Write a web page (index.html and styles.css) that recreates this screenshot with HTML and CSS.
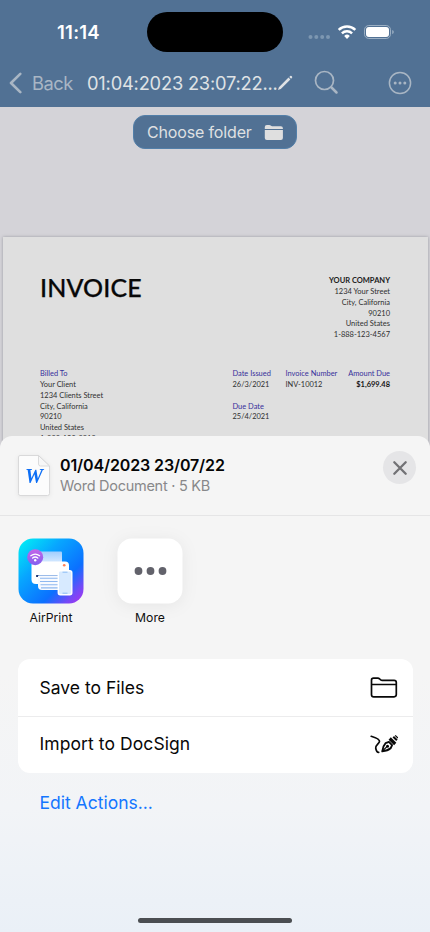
FILE: index.html
```html
<!DOCTYPE html>
<html lang="en">
<head>
<meta charset="utf-8">
<meta name="viewport" content="width=device-width, initial-scale=1">
<title>Share document</title>
<link rel="stylesheet" href="styles.css">
</head>
<body>
<div class="screen">
  <header class="header">
    <div class="status">
      <span class="time">11:14</span>
      <span class="island"></span>
      <svg class="status-icons" width="90" height="20" viewBox="0 0 90 20">
        <g fill="#7d97b1"><circle cx="2.500" cy="15" r="2"/><circle cx="8.300" cy="15" r="2"/><circle cx="14.200" cy="15" r="2"/><circle cx="20" cy="15" r="2"/></g>
        <g fill="none" stroke="#fff" stroke-width="2.500"><path d="M30.700 7.800a12 12 0 0 1 16.600 0"/><path d="M33.900 11.300a7.400 7.400 0 0 1 10.200 0"/></g>
        <path d="M36.200 13.900a4 4 0 0 1 5.600 0l-2.800 3z" fill="#fff"/>
        <rect x="56.500" y="3.500" width="26" height="13" rx="4.300" fill="none" stroke="#9bafc3"/>
        <rect x="58" y="5" width="23" height="10" rx="2.900" fill="#fff"/>
        <path d="M84.300 8v4.200q1.400-.6 1.400-2.100t-1.400-2.100z" fill="#a5b7c8"/>
      </svg>
    </div>
    <nav class="nav">
      <svg class="chevron" width="14" height="22" viewBox="0 0 14 22"><path d="M11.300 1.800 2 11l9.300 9.200" fill="none" stroke="#a9b6c4" stroke-width="2.600" stroke-linecap="round" stroke-linejoin="round"/></svg>
      <span class="back">Back</span>
      <span class="title">01:04:2023 23:07:22...</span>
      <svg class="pencil" width="16" height="16" viewBox="0 0 16 16"><path d="m1 15 .9-2.800L11.500 2.600l1.900 1.900L3.800 14zM12.300 1.900l.9-.9q.7-.6 1.300 0l.5.500q.6.700 0 1.300l-.9.900z" fill="#dfe2e5"/></svg>
      <svg class="search" width="26" height="26" viewBox="0 0 26 26"><circle cx="10.500" cy="10.500" r="9" fill="none" stroke="#a9b6c4" stroke-width="1.700"/><path d="m17.500 17.500 5 5" stroke="#a9b6c4" stroke-width="2.500" stroke-linecap="round"/></svg>
      <svg class="options" width="24" height="24" viewBox="0 0 24 24"><circle cx="12" cy="12" r="10.600" fill="none" stroke="#a9b6c4" stroke-width="1.500"/><g fill="#a9b6c4"><circle cx="7.200" cy="12" r="1.500"/><circle cx="12" cy="12" r="1.500"/><circle cx="16.800" cy="12" r="1.500"/></g></svg>
    </nav>
  </header>

  <main class="viewer">
    <div class="choose">
      <span class="choose-label">Choose folder</span>
      <svg width="20" height="17" viewBox="0 0 20 17"><path d="M.8 5V2.900Q.8.900 2.800.9h2.500q.8 0 1.400.5l.8.600q.5.300 1.200.3h8.200q2 0 2 2V5zM.8 6h18.100v8q0 2-2 2H2.800q-2 0-2-2z" fill="#dfdfdf"/></svg>
    </div>
    <article class="invoice">
      <section class="invoice-top">
        <h1 class="invoice-title">INVOICE</h1>
        <div class="company"><b>YOUR COMPANY</b><br>1234 Your Street<br>City, California<br>90210<br>United States<br>1-888-123-4567</div>
      </section>
      <section class="invoice-info">
        <div class="client"><span class="label">Billed To</span><br>Your Client<br>1234 Clients Street<br>City, California<br>90210<br>United States<br>1-888-123-8910</div>
        <div class="dates"><span class="label">Date Issued</span><br>26/3/2021<br><br><span class="label">Due Date</span><br>25/4/2021</div>
        <div class="number"><span class="label">Invoice Number</span><br>INV-10012</div>
        <div class="amount"><span class="label">Amount Due</span><br><b>$1,699.48</b></div>
      </section>
    </article>
  </main>

  <section class="sheet">
    <header class="sheet-header">
      <svg class="doc" width="34" height="44" viewBox="0 0 34 44">
        <path d="M3 1.500h18.500L32.500 12v27.500q0 2-2 2H3q-1.500 0-1.500-2V3Q1.500 1.500 3 1.500z" fill="#fcfcfc" stroke="#d9d9da"/>
        <path d="M21.500 1.500V10q0 2 2 2h9z" fill="#f7f7f7" stroke="#d3d3d4" stroke-width=".8"/>
        <text class="doc-letter" x="17" y="28.500" text-anchor="middle" textLength="18" lengthAdjust="spacingAndGlyphs">W</text>
      </svg>
      <div class="file">
        <div class="file-name">01/04/2023 23/07/22</div>
        <div class="file-type">Word Document · 5 KB</div>
      </div>
      <div class="close"><svg width="16" height="16" viewBox="0 0 16 16"><path d="m2.300 2.300 11.400 11.400m0-11.400L2.300 13.700" stroke="#727275" stroke-width="2.300" stroke-linecap="round"/></svg></div>
    </header>
    <div class="apps">
      <div class="app">
        <svg class="app-icon" width="66" height="66" viewBox="0 0 66 66">
          <defs>
            <linearGradient id="bg" x1="0" y1="0" x2="1" y2="1"><stop offset="0" stop-color="#00f5f4"/><stop offset=".34" stop-color="#08a6ff"/><stop offset=".68" stop-color="#0b70ff"/><stop offset=".86" stop-color="#7549f7"/><stop offset="1" stop-color="#b230ed"/></linearGradient>
            <linearGradient id="paper" x1="0" y1="0" x2="0" y2="1"><stop stop-color="#9fceff"/><stop offset="1" stop-color="#dcecff"/></linearGradient>
            <linearGradient id="badge" x1="0" y1="0" x2="0" y2="1"><stop stop-color="#c565e8"/><stop offset="1" stop-color="#8260ef"/></linearGradient>
          </defs>
          <rect x=".5" y=".5" width="65" height="65" rx="14.500" fill="url(#bg)"/>
          <rect x="20.500" y="13.500" width="23.500" height="12" rx="1" fill="url(#paper)"/>
          <path d="M17 23.500h30q4 0 4 4V41q0 5-5 5H18q-4.500 0-4.500-4.500V27q0-3.500 3.500-3.500z" fill="#fff"/>
          <rect x="18" y="37" width="26" height="2" rx=".8" fill="#9dbce9"/><rect x="18" y="37" width="2.500" height="2" rx=".8" fill="#20356f"/>
          <path d="M20 38h22v14H24q-4 0-4-4z" fill="#f7faff"/>
          <path d="M22 40.300h18M22 43.500h18M22.500 46.700h17.500M23 49.900h17" stroke="#8eb8f0" stroke-width="1.100"/>
          <circle cx="46.200" cy="27.200" r="1.300" fill="#ff8056"/>
          <rect x="40.300" y="32.800" width="13.500" height="24" rx="2" fill="#d7eaff" stroke="#fff" stroke-width="1.400"/>
          <path d="M44.500 34.200h5m-5 21h5" stroke="#8dbdf4" stroke-width="1"/>
          <circle cx="17.200" cy="19.200" r="8" fill="url(#badge)"/>
          <g fill="none" stroke="#fff" stroke-width="1.300" stroke-linecap="round"><path d="M12.800 17.700q4.400-3.300 8.800 0"/><path d="M14.600 20q2.600-2 5.200 0"/></g><circle cx="17.200" cy="22.200" r="1.200" fill="#fff"/>
        </svg>
        <span class="app-label">AirPrint</span>
      </div>
      <div class="app">
        <svg class="app-icon more" width="66" height="66" viewBox="0 0 66 66"><rect x=".5" y=".5" width="65" height="65" rx="14.500" fill="#fff"/><g fill="#62626b"><circle cx="21.500" cy="33" r="3.900"/><circle cx="33.500" cy="33" r="3.900"/><circle cx="45.500" cy="33" r="3.900"/></g></svg>
        <span class="app-label">More</span>
      </div>
    </div>
    <div class="actions">
      <div class="action"><span>Save to Files</span>
        <svg width="28" height="24" viewBox="0 0 28 24"><path d="M1.500 19.700V5.200q0-2 2-2h4.300q1 0 1.800.7l1.100.9q.6.500 1.500.5h11.900q2.200 0 2.200 2.200v12.100q0 2.200-2.200 2.200H3.700q-2.200 0-2.200-2.100zM1.500 9.500h24.800" fill="none" stroke="#080808" stroke-width="1.700" stroke-linejoin="round"/></svg>
      </div>
      <div class="action"><span class="import-label">Import to DocSign</span>
        <svg width="28" height="24" viewBox="0 0 28 24"><g transform="translate(0 1)"><path d="M1.200 3.300C5 4.500 10 6.300 9.500 8.600 9 10.700 5.300 12.500 5.700 15c.3 2 1.100 4.300 3 4.400" fill="none" stroke="#090909" stroke-width="1.700" stroke-linecap="round"/><path d="M12.300 18.300q.6-5.300 3.300-8.100l3.300-1.300 3.200 3.200-1.500 3.200q-2.800 2.500-8.300 3z" fill="#fff" stroke="#090909" stroke-width="1.900" stroke-linejoin="round"/><path d="m12 18.500 4.700-4.700" stroke="#090909" stroke-width="1.200"/><circle cx="17.500" cy="13.300" r="1.500"/><path d="m19.700 5.500 5.500 5.500" stroke="#090909" stroke-width="3.200"/><path d="m23.300 3.700 3.600 3.600" stroke="#090909" stroke-width="2"/><path d="m25.200 2.300 2.700 2.700" stroke="#090909" stroke-width="1.200"/></g></svg>
      </div>
    </div>
    <div class="edit"><span>Edit Actions...</span></div>
    <div class="home"></div>
  </section>
</div>
</body>
</html>
```
FILE: styles.css
```css
* { box-sizing: border-box; }
body { margin: 0; font-family: Inter, sans-serif; }
svg { display: block; flex: none; }
.screen { position: relative; width: 430px; height: 932px; overflow: hidden; background: #d4d3d8; }
.header { height: 107px; background: #517194; }
.status { height: 64px; display: flex; align-items: center; padding-left: 57px; }
.time { width: 90px; font-size: 18.5px; font-weight: 600; letter-spacing: .25px; color: #fff; white-space: nowrap; }
.island { width: 136px; height: 40px; border-radius: 20px; background: #000; }
.status-icons { margin-left: 25px; }
.nav { height: 38px; display: flex; align-items: center; padding-left: 9px; white-space: nowrap; }
.back { width: 55px; padding-left: 9px; font-size: 18.3px; color: #a9b6c4; letter-spacing: -.5px; }
.title { width: 192px; margin-left: 9px; font-size: 18.3px; color: #dfe2e5; letter-spacing: -.2px; }
.pencil { margin-left: -2px; }
.search { margin-left: 21px; }
.options { margin-left: 48px; }
.viewer { padding-top: 8px; }
.choose { width: 164px; height: 34px; margin: 0 auto; border-radius: 12px; border: 1px solid #527fa9; background: #517194; display: flex; align-items: center; padding-left: 13px; gap: 12px; color: #dfe0e2; white-space: nowrap; }
.choose-label { width: 105px; font-size: 16px; letter-spacing: -.15px; }
.invoice { width: 425px; height: 500px; margin: 88px 0 0 2.500px; padding: 36px 37.500px 0; background: #dfdfdf; box-shadow: 0 0 3px #9999a0; font: 7.350px/10.850px Lato, sans-serif; color: #303030; white-space: nowrap; }
.invoice-top { height: 96px; display: flex; justify-content: space-between; }
.invoice-title { margin: 0; font-size: 25px; font-weight: 500; line-height: 28px; letter-spacing: .1px; color: #080808; -webkit-text-stroke: .25px #080808; }
.company { padding-top: 3px; text-align: right; font-size: 7.500px; }
.company b { color: #202020; }
.invoice-info { display: grid; grid-template-columns: 192.500px 53px 56px 1fr; font-size: 7.450px; }
.label { color: #37309b; }
.amount { justify-self: end; text-align: right; }
.amount b { color: #151515; }
.sheet { position: absolute; inset: 436px 0 0; border-radius: 12px 12px 0 0; background: linear-gradient(#f5f5f5 0%, #f5f5f5 48%, #f2f4f7 75%, #eaf0f7 100%); }
.sheet-header { height: 80px; border-bottom: 1.500px solid #e5e5e6; display: flex; align-items: flex-start; padding: 15px 14px 0 17px; }
.doc { margin-top: 3px; filter: drop-shadow(0 1px 2px #0001); }
.doc-letter { font: italic 700 22px "Liberation Serif", serif; fill: #0e6ff5; }
.file { flex: 1; margin-left: 9px; padding-top: 4px; white-space: nowrap; }
.file-name { height: 21px; font-size: 16px; line-height: 21px; font-weight: 600; letter-spacing: -.12px; color: #050505; }
.file-type { font-size: 14.500px; line-height: 20px; letter-spacing: -.27px; color: #88888a; }
.close { width: 33px; height: 33px; border-radius: 50%; background: #e5e5e7; display: grid; place-items: center; }
.apps { display: flex; gap: 33px; height: 143px; padding: 22px 18px 0; }
.app { width: 66px; display: flex; flex-direction: column; align-items: center; }
.app-label { margin-top: 6px; font-size: 12.200px; line-height: 16px; color: #111; }
.more { filter: drop-shadow(0 2px 8px #00000010); }
.actions { width: 395px; height: 114px; margin-left: 17.500px; border-radius: 12px; background: #fff; }
.action { height: 57px; display: flex; align-items: center; justify-content: space-between; padding: 0 15px 1px 22px; font-size: 17.500px; color: #080808; white-space: nowrap; }
.action + .action { border-top: 1.500px solid #ececed; padding-bottom: 3px; }
.import-label { letter-spacing: .08px; }
.edit { height: 58px; display: flex; align-items: center; padding-left: 39.500px; font-size: 17.500px; color: #1476ff; }
.home { width: 154px; height: 5px; margin: 87px auto 0; border-radius: 3px; background: #4b4e52; }
```
